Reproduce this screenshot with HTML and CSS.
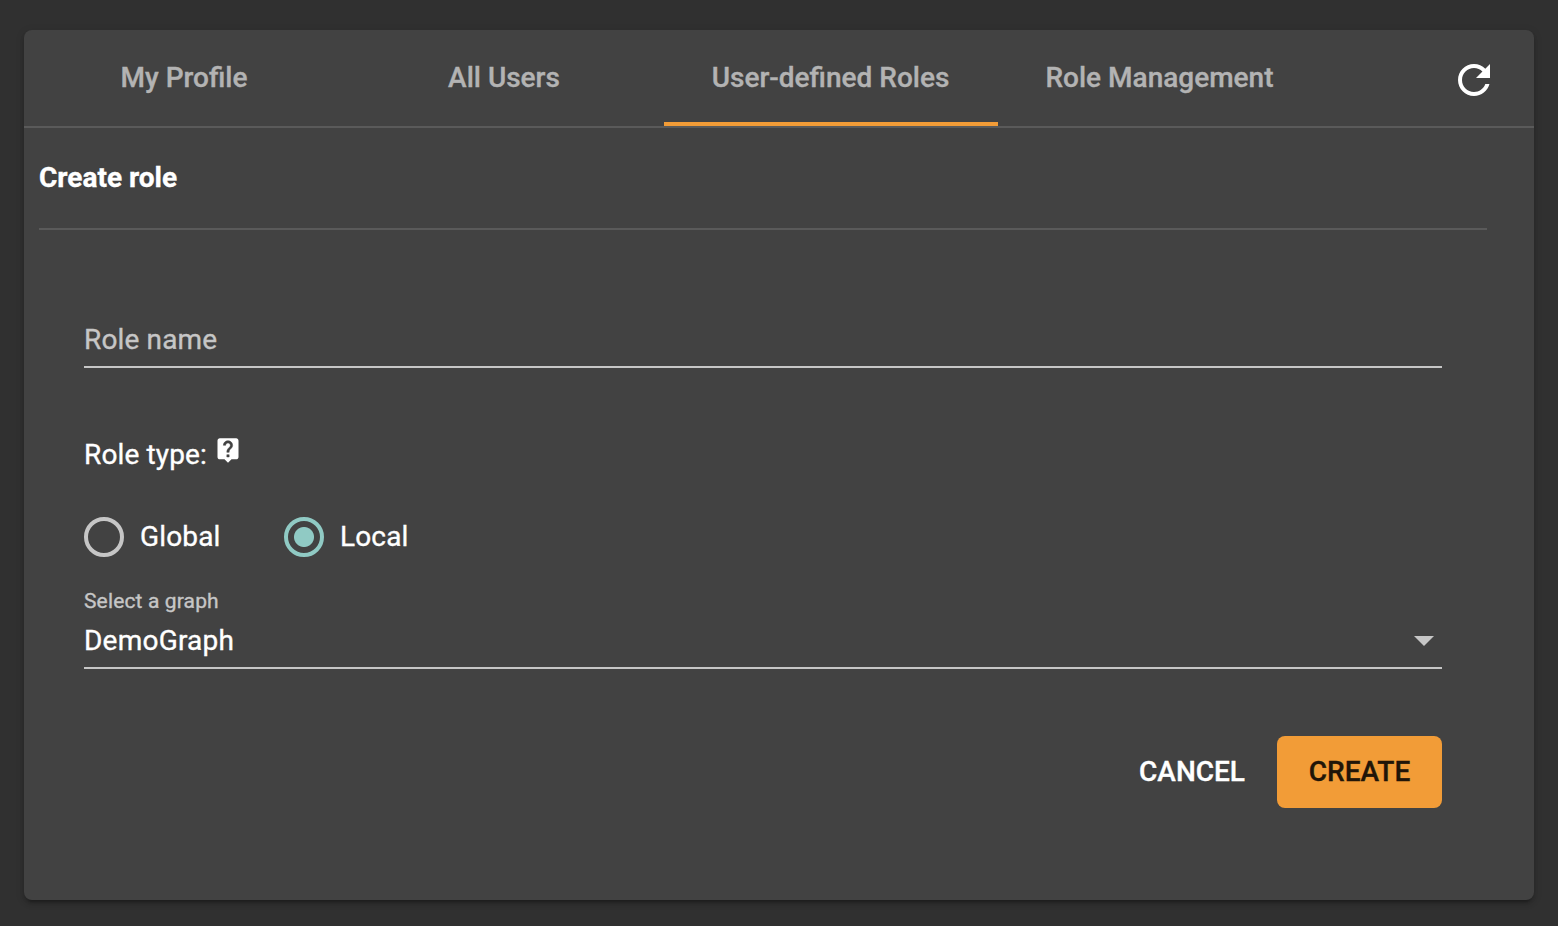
FILE: index.html
```html
<!DOCTYPE html>
<html lang="en">
<head>
<meta charset="utf-8">
<title>Create role</title>
<link rel="stylesheet" href="styles.css">
</head>
<body>
<main class="card">
  <header class="tabs">
    <nav class="tab-list">
      <a class="tab tab-side"><span>My Profile</span></a>
      <a class="tab tab-side"><span>All Users</span></a>
      <a class="tab tab-active"><span>User-defined Roles</span></a>
      <a class="tab tab-last"><span>Role Management</span></a>
    </nav>
    <button class="refresh" aria-label="Refresh">
      <svg viewBox="0 0 24 24" width="48" height="48"><path fill="#fff" d="M17.65 6.35C16.2 4.9 14.21 4 12 4c-4.42 0-7.99 3.58-7.99 8s3.57 8 7.99 8c3.73 0 6.84-2.55 7.73-6h-2.08c-.82 2.33-3.04 4-5.65 4-3.31 0-6-2.69-6-6s2.69-6 6-6c1.66 0 3.14.69 4.22 1.78L13 11h7V4l-2.35 2.35z"/></svg>
    </button>
  </header>
  <section class="content">
    <h1 class="title"><span>Create role</span></h1>
    <form class="form">
      <div class="field name-field"><span>Role name</span></div>
      <div class="type-row"><span>Role type:</span>
        <svg class="help" viewBox="0 0 24 24" width="28" height="28"><path fill="#fff" d="M19 2H5c-1.11 0-2 .9-2 2v14c0 1.1.89 2 2 2h4l3 3 3-3h4c1.1 0 2-.9 2-2V4c0-1.1-.9-2-2-2z"/><path class="help-mark" d="M13 18h-2v-2h2v2zm2.07-7.75l-.9.92C13.45 11.9 13 12.5 13 14h-2v-.5c0-1.1.45-2.1 1.17-2.83l1.24-1.26c.37-.36.59-.86.59-1.41 0-1.1-.9-2-2-2s-2 .9-2 2H8c0-2.21 1.79-4 4-4s4 1.79 4 4c0 .88-.36 1.68-.93 2.25z"/></svg>
      </div>
      <div class="radios">
        <label class="radio"><i class="ring"></i><span>Global</span></label>
        <label class="radio"><i class="ring ring-on"></i><span>Local</span></label>
      </div>
      <div class="select-label"><span>Select a graph</span></div>
      <div class="field select-field"><span>DemoGraph</span><i class="arrow"></i></div>
      <div class="actions">
        <button type="button" class="cancel"><span>CANCEL</span></button>
        <button type="button" class="create"><span>CREATE</span></button>
      </div>
    </form>
  </section>
</main>
</body>
</html>
```
FILE: styles.css
```css
* { box-sizing: border-box; }
body { margin: 0; height: 926px; padding: 30px 24px 26px; overflow: hidden; background: #303030; color: #fff; font: 400 28px/32px Roboto, sans-serif; }
span { white-space: nowrap; -webkit-text-stroke: .35px currentColor; }
button { border: 0; padding: 0; background: none; color: inherit; font: inherit; }
svg { display: block; }
.card { height: 870px; border-radius: 8px; background: #424242; box-shadow: 0 6px 2px -4px rgba(0,0,0,.2), 0 4px 4px rgba(0,0,0,.14), 0 2px 10px rgba(0,0,0,.12); }
.tabs { height: 98px; display: flex; justify-content: space-between; border-bottom: 2px solid #5a5a5a; }
.tab-list { display: flex; }
.tab { display: flex; align-items: center; justify-content: center; height: 96px; color: #b3b3b3; font-weight: 500; }
.tab-side { width: 320px; }
.tab-active { width: 334px; border-bottom: 4px solid #f29c37; padding: 4px 1px 0 0; }
.tab-last { width: 323px; }
.refresh { margin: 26px 36px 0 0; height: 48px; }
.content { padding: 32px 47px 0 15px; }
.title { margin: 0; height: 70px; padding-top: 2px; border-bottom: 2px solid #5a5a5a; font: inherit; font-weight: 700; }
.form { padding: 0 45px; letter-spacing: .14px; }
.field { border-bottom: 2px solid #c6c6c6; }
.name-field { margin-top: 94px; height: 44px; color: #c6c6c6; }
.type-row { display: flex; margin-top: 71px; height: 32px; gap: 7px; }
.help { margin-top: -3px; }
.help-mark { fill: #424242; stroke: #424242; stroke-width: .4; }
.radios { display: flex; gap: 64px; margin-top: 46px; height: 40px; }
.radio { display: flex; align-items: center; gap: 16px; width: 136px; }
.ring { flex: none; width: 40px; height: 40px; border: 4px solid #c6c6c6; border-radius: 50%; }
.ring-on { border-color: #90cac4; background: radial-gradient(circle, #90cac4 9.5px, transparent 10.5px); }
.select-label { margin-top: 32px; height: 24px; line-height: 24px; font-size: 21px; color: #c6c6c6; }
.select-field { display: flex; justify-content: space-between; margin-top: 12px; height: 44px; letter-spacing: .22px; }
.arrow { margin: 11px 8px 0 0; width: 20px; height: 10px; background: #c6c6c6; clip-path: polygon(0 0, 100% 0, 50% 100%); }
.actions { display: flex; justify-content: flex-end; gap: 32px; margin-top: 67px; height: 72px; letter-spacing: 0; }
.cancel { font-weight: 500; }
.create { width: 165px; border-radius: 8px; background: #f29c37; color: #211508; font-weight: 500; }
```
